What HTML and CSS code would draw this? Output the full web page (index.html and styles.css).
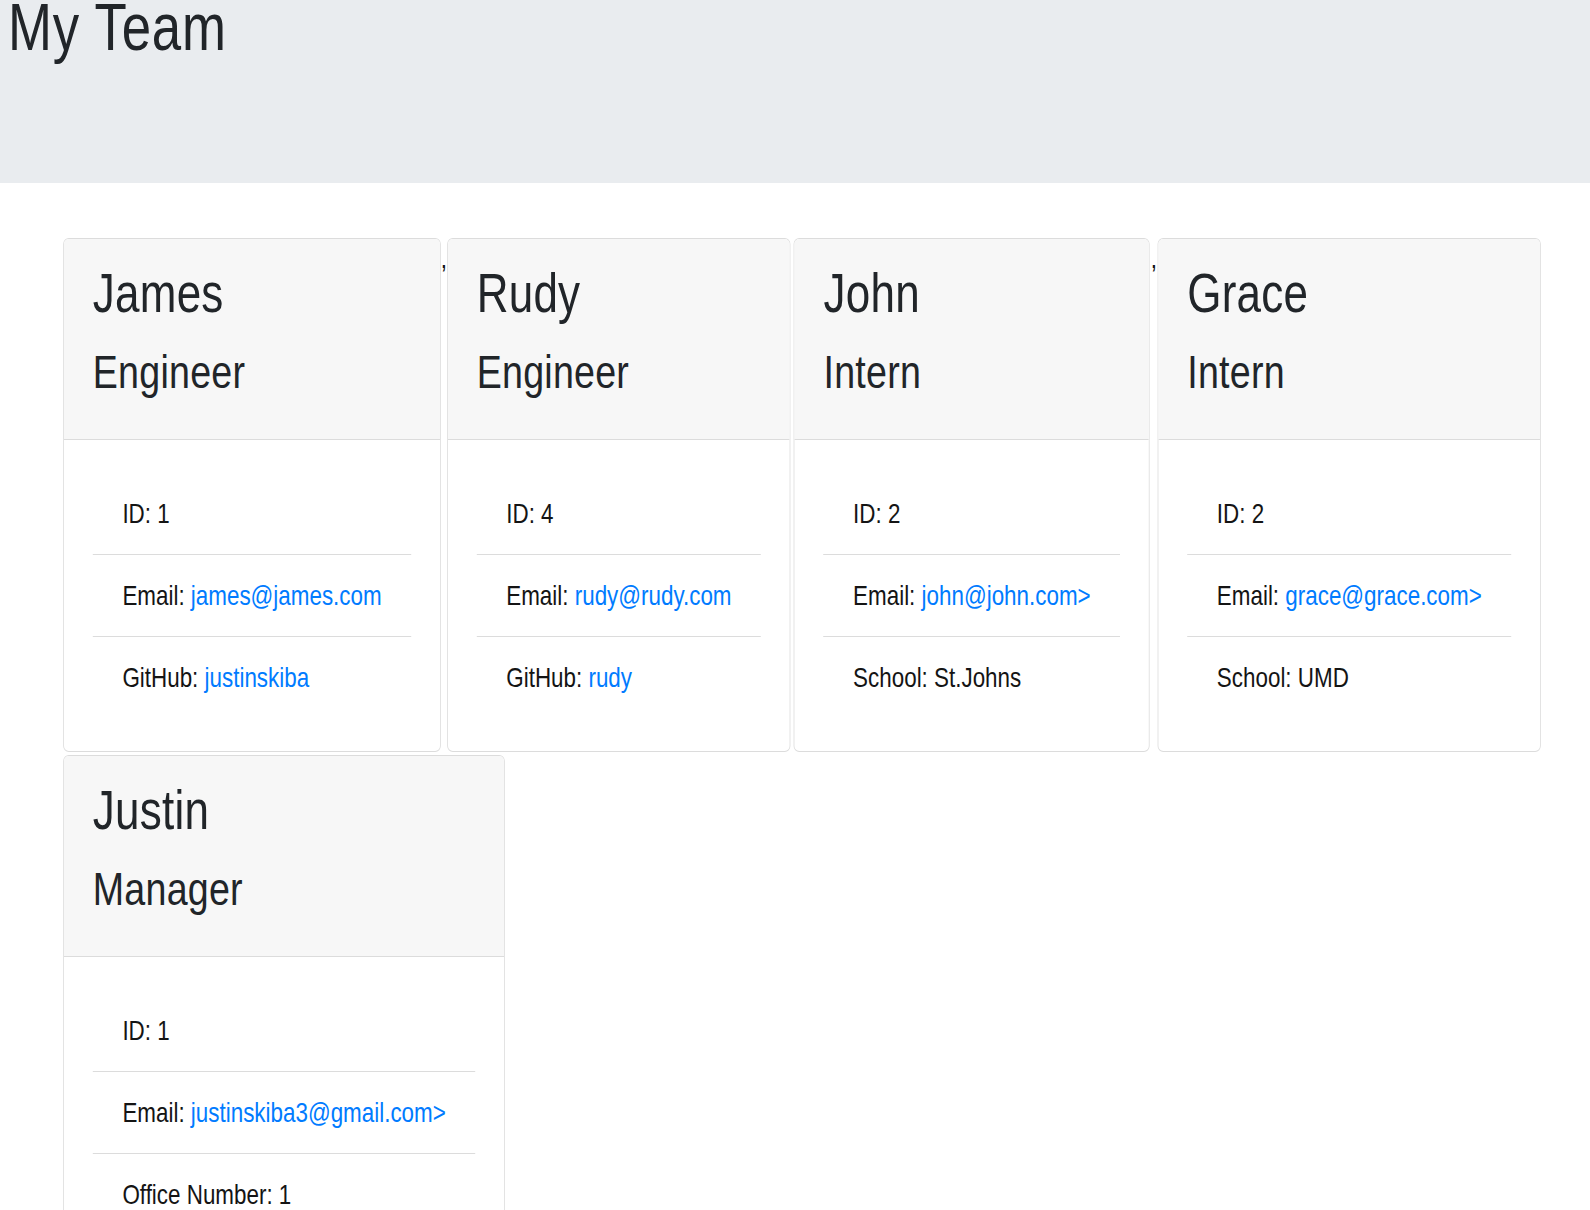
FILE: index.html
```html
<!DOCTYPE html>
<html lang="en">
<head>
<meta charset="utf-8">
<title>My Team</title>
<link rel="stylesheet" href="styles.css">
</head>
<body>
<div class="frame">
<div class="page">
<header class="jumbotron">
  <h1 class="title">My Team</h1>
</header>
<main class="team">
  <div class="card">
    <div class="card-header">
      <h2 class="card-name">James</h2>
      <h3 class="card-role">Engineer</h3>
    </div>
    <div class="card-body">
      <ul class="list">
        <li class="item">ID: 1</li>
        <li class="item">Email: <a class="link" href="mailto:james@james.com">james@james.com</a></li>
        <li class="item">GitHub: <a class="link" href="#">justinskiba</a></li>
      </ul>
    </div>
  </div>
  <span class="sep">,</span>
  <div class="card card-spaced">
    <div class="card-header">
      <h2 class="card-name">Rudy</h2>
      <h3 class="card-role">Engineer</h3>
    </div>
    <div class="card-body">
      <ul class="list">
        <li class="item">ID: 4</li>
        <li class="item">Email: <a class="link" href="mailto:rudy@rudy.com">rudy@rudy.com</a></li>
        <li class="item">GitHub: <a class="link" href="#">rudy</a></li>
      </ul>
    </div>
  </div>
  <div class="card">
    <div class="card-header">
      <h2 class="card-name">John</h2>
      <h3 class="card-role">Intern</h3>
    </div>
    <div class="card-body">
      <ul class="list">
        <li class="item">ID: 2</li>
        <li class="item">Email: <a class="link" href="mailto:john@john.com">john@john.com&gt;</a></li>
        <li class="item">School: St.Johns</li>
      </ul>
    </div>
  </div>
  <span class="sep sep-wide">,</span>
  <div class="card">
    <div class="card-header">
      <h2 class="card-name">Grace</h2>
      <h3 class="card-role">Intern</h3>
    </div>
    <div class="card-body">
      <ul class="list">
        <li class="item">ID: 2</li>
        <li class="item">Email: <a class="link" href="mailto:grace@grace.com">grace@grace.com&gt;</a></li>
        <li class="item">School: UMD</li>
      </ul>
    </div>
  </div>
  <div class="card">
    <div class="card-header">
      <h2 class="card-name">Justin</h2>
      <h3 class="card-role">Manager</h3>
    </div>
    <div class="card-body">
      <ul class="list">
        <li class="item">ID: 1</li>
        <li class="item">Email: <a class="link" href="mailto:justinskiba3@gmail.com">justinskiba3@gmail.com&gt;</a></li>
        <li class="item">Office Number: 1</li>
      </ul>
    </div>
  </div>
</main>
</div>
</div>
</body>
</html>
```

FILE: styles.css
```css
* {
  box-sizing: border-box;
}

html,
body {
  overflow-x: hidden;
}

body {
  margin: 0;
  font-family: "Liberation Sans", Arial, sans-serif;
  color: #212529;
  background: #ffffff;
}

.frame {
  width: 100%;
  overflow: hidden;
}

/* The reference is horizontally condensed: lay out wide, then squeeze */
.page {
  width: 1987.5px;
  transform: scaleX(0.8);
  transform-origin: 0 0;
}

.jumbotron {
  height: 183px;
  background: #e9ecef;
  padding: 0 0 0 10px;
}

.title {
  margin: 0;
  font-size: 66px;
  line-height: 55px;
  letter-spacing: 1px;
  font-weight: normal;
  color: #212529;
}

.team {
  display: flex;
  flex-wrap: wrap;
  align-items: stretch;
  row-gap: 3px;
  padding: 55px 0 0 79px;
  font-size: 28px;
  line-height: 41px;
}

.sep {
  color: #111;
}

.sep-wide {
  padding: 0 1px;
}

.card {
  display: flex;
  flex-direction: column;
  border: 1px solid #dcdcdc;
  border-radius: 7px / 6px;
  background: #ffffff;
}

.card-spaced {
  margin-right: 4px;
}

.card-header {
  background: #f7f7f7;
  border-bottom: 1px solid #dcdcdc;
  border-radius: 6px 6px 0 0 / 5px 5px 0 0;
  padding: 21px 36px;
}

.card-name {
  margin: 0 0 19px;
  font-size: 55px;
  line-height: 66px;
  letter-spacing: 0.3px;
  font-weight: normal;
  color: #212529;
}

.card-role {
  margin: 0 0 19px;
  font-size: 47px;
  line-height: 54px;
  letter-spacing: 0.3px;
  font-weight: normal;
  color: #212529;
}

.card-body {
  flex: 1;
  padding: 33px 36px 33px;
}

.list {
  margin: 0;
  padding: 0;
  list-style: none;
}

.item {
  padding: 20px 37px;
  line-height: 41px;
  border-bottom: 1px solid #dcdcdc;
  color: #141414;
  white-space: nowrap;
}

.item:last-child {
  border-bottom: none;
}

.link {
  color: #007bff;
  text-decoration: none;
}
```
